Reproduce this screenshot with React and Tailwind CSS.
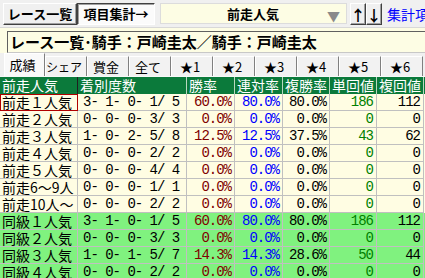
import React from "react";

const rows = [
  ["前走１人気", "3- 1- 0- 1/ 5", "60.0%", "80.0%", "80.0%", "186", "112", "y", true],
  ["前走２人気", "0- 0- 0- 3/ 3", "0.0%", "0.0%", "0.0%", "0", "0", "y"],
  ["前走３人気", "1- 0- 2- 5/ 8", "12.5%", "12.5%", "37.5%", "43", "62", "y"],
  ["前走４人気", "0- 0- 0- 2/ 2", "0.0%", "0.0%", "0.0%", "0", "0", "y"],
  ["前走５人気", "0- 0- 0- 4/ 4", "0.0%", "0.0%", "0.0%", "0", "0", "y"],
  ["前走6〜9人", "0- 0- 0- 1/ 1", "0.0%", "0.0%", "0.0%", "0", "0", "y"],
  ["前走10人〜", "0- 0- 0- 2/ 2", "0.0%", "0.0%", "0.0%", "0", "0", "y"],
  ["同級１人気", "3- 1- 0- 1/ 5", "60.0%", "80.0%", "80.0%", "186", "112", "g"],
  ["同級２人気", "0- 0- 0- 3/ 3", "0.0%", "0.0%", "0.0%", "0", "0", "g"],
  ["同級３人気", "1- 0- 1- 5/ 7", "14.3%", "14.3%", "28.6%", "50", "44", "g"],
  ["同級４人気", "0- 0- 0- 2/ 2", "0.0%", "0.0%", "0.0%", "0", "0", "g"],
];

const tabs = ["成績", "シェア", "賞金", "全て", "★1", "★2", "★3", "★4", "★5", "★6"];
const heads = ["前走人気", "着別度数", "勝率", "連対率", "複勝率", "単回値", "複回値"];

const cjk = "font-['MS_Gothic','Noto_Sans_CJK_JP',sans-serif]";
const mono = "font-['Liberation_Mono','Noto_Sans_CJK_JP',monospace] text-[14px] tracking-[-1px]";
const grid = "grid grid-cols-[78px_109px_48px_48px_47px_47px_47px]";
const btn = "shrink-0 flex items-center justify-center bg-[#f0f0f0] border border-t-white border-l-white border-r-[#404040] border-b-[#404040] shadow-[inset_-1px_-1px_0_#a0a0a0]";

export default function App() {
  return (
    <div className={`w-[425px] h-[278px] overflow-hidden bg-[#f0f0f0] ${cjk}`}>
      {/* top bar */}
      <div className="flex items-start h-[27px] pt-[3px] pl-[3px] whitespace-nowrap overflow-hidden">
        <div className={`${btn} w-[74px] h-[22px] text-[13px] font-bold text-black`}>
          レース一覧
        </div>
        <div className="shrink-0 w-[78px] h-[22px] flex items-center justify-center bg-[#fbfbfb] border border-t-[#404040] border-l-[#404040] border-r-white border-b-white shadow-[inset_1px_1px_0_#a0a0a0] text-[13px] font-bold text-black">
          項目集計→
        </div>
        <div className="shrink-0 ml-[5px] w-[187px] h-[21px] flex items-center bg-[#fdfde4] border border-[#dcdcdc] relative">
          <span className="ml-[66px] text-[13px] font-bold text-black">前走人気</span>
          <span className="absolute right-[6px] top-[2px] text-[#8a8a8a] text-[13px]">▼</span>
        </div>
        <div className={`${btn} ml-[3px] w-[16px] h-[22px] text-[15px] font-bold leading-none`}>↑</div>
        <div className={`${btn} w-[16px] h-[22px] text-[15px] font-bold leading-none`}>↓</div>
        <div className="shrink-0 ml-[5px] h-[22px] flex items-center text-[14px] text-[#0000ff]">集計項目</div>
      </div>

      {/* title band */}
      <div className="h-[26px] bg-[#fdfde4] pt-[3px] pl-[7px] border-t border-[#d8d8d8]">
        <div className="h-[22px] flex items-center border-t border-l border-b border-t-[#606060] border-l-[#606060] border-b-[#c8c8c8] bg-[#fdfde4] pl-[2px] text-[15px] font-bold text-black whitespace-nowrap">
          レース一覧･騎手：戸崎圭太／騎手：戸崎圭太
        </div>
      </div>

      {/* tabs */}
      <div className="h-[24px] flex items-end pl-[4px] bg-[#f0f0f0] border-b border-[#f8f8f8]">
        {tabs.map((t, i) => (
          <div
            key={t}
            className={`${i === 0 ? "w-[41px] h-[23px] bg-[#f9f9f9]" : "w-[42px] h-[20px] bg-[#f2f2f2]"} shrink-0 flex items-center justify-center pr-[4px] border-l border-t border-r border-l-white border-t-white border-r-[#808080] text-[13px] text-black whitespace-nowrap`}
          >
            {t === "シェア" ? <span className="text-[12px]">{t}</span> : t}
          </div>
        ))}
      </div>

      {/* header */}
      <div className={`${grid} h-[17px] bg-[#0b7a3b]`}>
        {heads.map((h, i) => (
          <div key={h} className={`h-[17px] border-r ${i === 0 ? "border-[#202020]" : "border-[#b8d8c0]"} pl-[2px] text-[14px] leading-[17px] text-white whitespace-nowrap overflow-hidden`}>
            {h}
          </div>
        ))}
      </div>

      {/* data rows */}
      {rows.map((r) => {
        const bg = r[7] === "g" ? "bg-[#80f27f]" : "bg-[#fffde3]";
        return (
          <div key={r[0]} className={`${grid} h-[17px] ${bg}`}>
            <div className={`h-[17px] border-r border-b pl-[2px] text-[14px] leading-[16px] text-black whitespace-nowrap overflow-hidden ${r[8] ? "border-[#b00000] shadow-[inset_1px_1px_0_#b00000]" : "border-[#c0c0c0]"}`}>
              {r[0]}
            </div>
            <div className={`h-[17px] border-r border-b border-[#c0c0c0] pl-[5px] ${mono} leading-[16px] text-black whitespace-pre`}>{r[1]}</div>
            <div className={`h-[17px] border-r border-b border-[#c0c0c0] pr-[3px] text-right ${mono} leading-[16px] text-[#800000]`}>{r[2]}</div>
            <div className={`h-[17px] border-r border-b border-[#c0c0c0] pr-[3px] text-right ${mono} leading-[16px] text-[#0000ff]`}>{r[3]}</div>
            <div className={`h-[17px] border-r border-b border-[#c0c0c0] pr-[3px] text-right ${mono} leading-[16px] text-black`}>{r[4]}</div>
            <div className={`h-[17px] border-r border-b border-[#c0c0c0] pr-[3px] text-right ${mono} leading-[16px] text-[#008000]`}>{r[5]}</div>
            <div className={`h-[17px] border-r border-b border-[#c0c0c0] pr-[3px] text-right ${mono} leading-[16px] text-black`}>{r[6]}</div>
          </div>
        );
      })}
    </div>
  );
}
